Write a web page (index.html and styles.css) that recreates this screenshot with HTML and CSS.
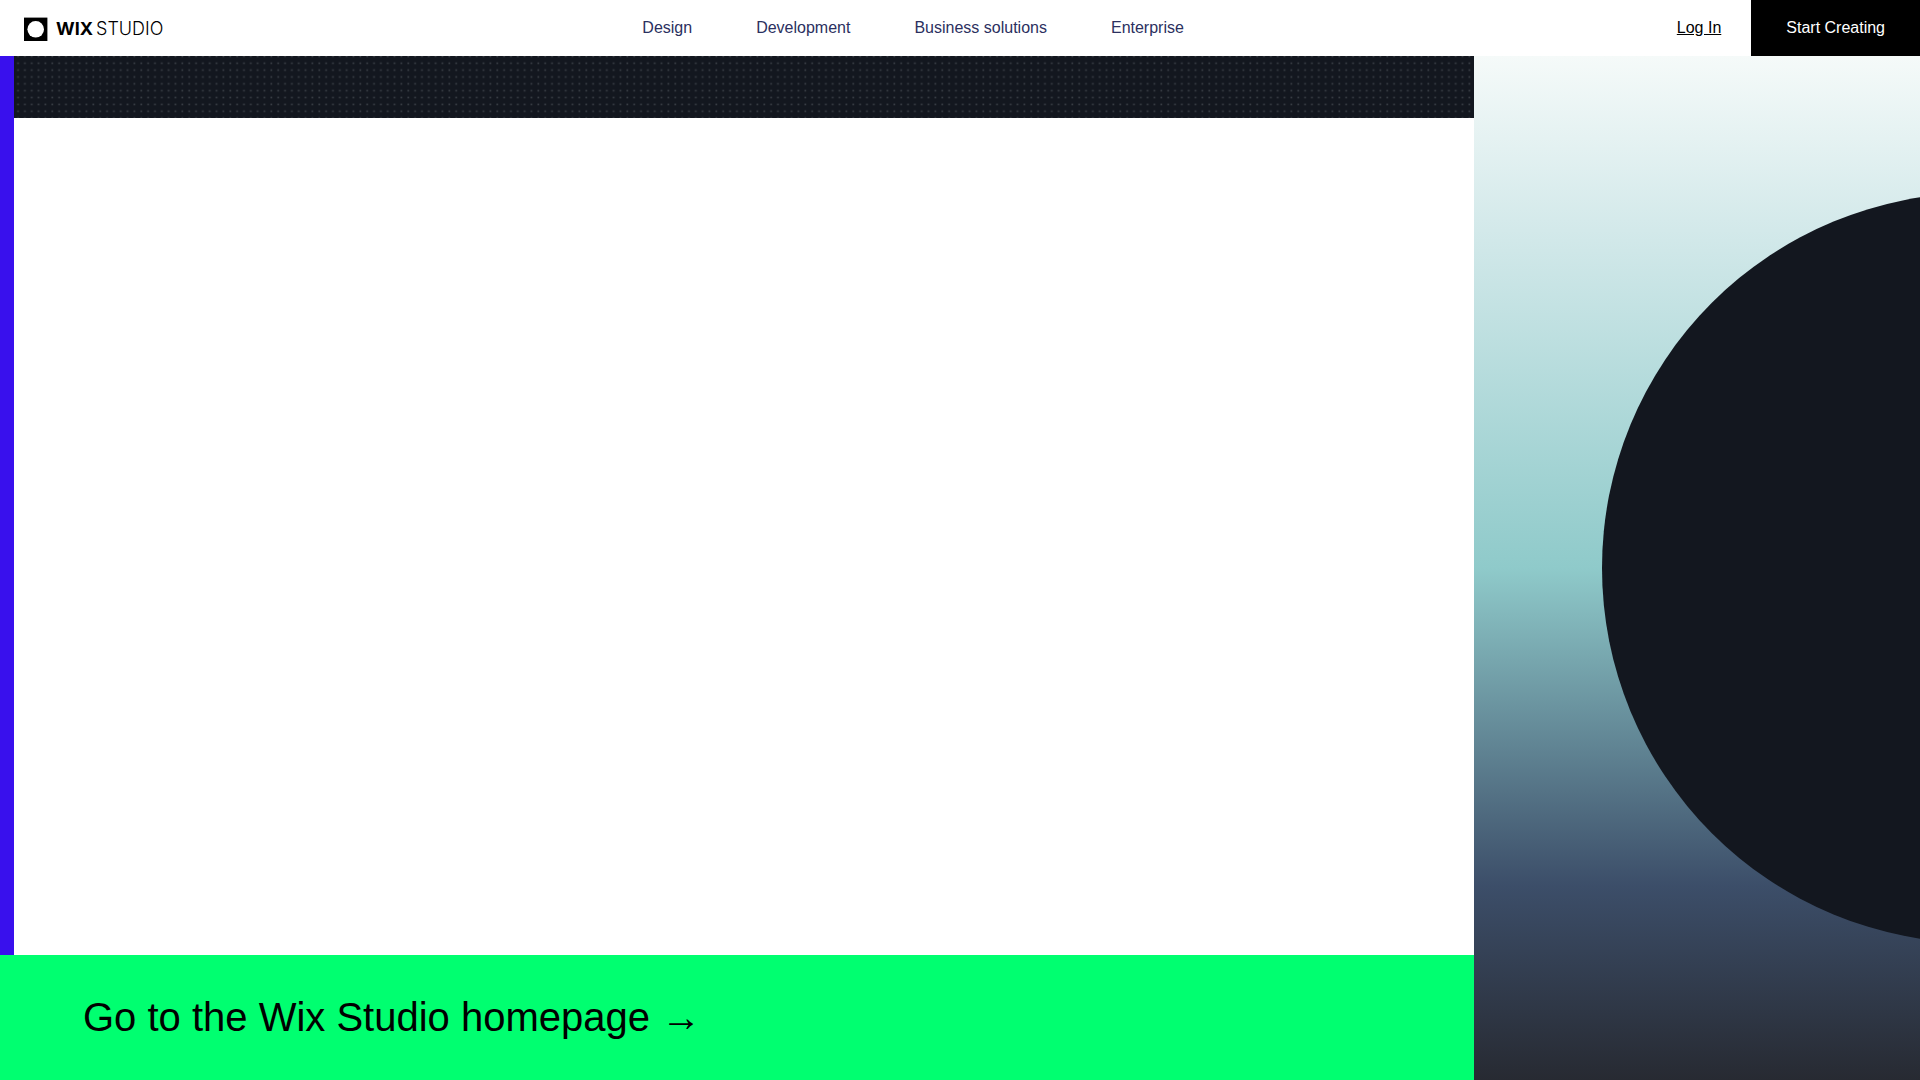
FILE: index.html
```html
<!DOCTYPE html>
<html lang="en">
<head>
  <meta charset="UTF-8" />
  <meta name="viewport" content="width=device-width, initial-scale=1.0" />
  <title>Wix Studio</title>
  <link rel="stylesheet" href="styles.css">
</head>
<body>
  <header class="site-header">
    <a class="logo" href="#">
      <svg class="logo-mark" viewBox="0 0 24 24" aria-hidden="true">
        <rect y="0.6" width="23.4" height="23.4" />
        <circle cx="11.7" cy="12.3" r="8.3" fill="#fff" />
      </svg>
      <span class="logo-text"><b>WIX</b><span class="logo-studio">STUDIO</span></span>
    </a>
    <nav class="main-nav">
      <a href="#">Design</a>
      <a href="#">Development</a>
      <a href="#">Business solutions</a>
      <a href="#">Enterprise</a>
    </nav>
    <div class="account">
      <a class="login" href="#">Log In</a>
      <a class="start-btn" href="#">Start Creating</a>
    </div>
  </header>

  <main class="hero">
    <section class="left-side">
      <div class="canvas">
        <svg class="dots" aria-hidden="true">
          <defs>
            <pattern id="dotGrid" x="0.8" y="-3" width="6.846" height="6.857" patternUnits="userSpaceOnUse">
              <rect x="2.4" y="2.6" width="1.7" height="1.6" fill="#3a3f46" />
            </pattern>
          </defs>
          <rect width="100%" height="100%" fill="url(#dotGrid)" />
        </svg>
      </div>
      <a class="home-link" href="#">Go to the Wix Studio homepage →</a>
    </section>
    <section class="right-side">
      <div class="circle"></div>
    </section>
  </main>
</body>
</html>
```

FILE: styles.css
```css
* {
  box-sizing: border-box;
}
body {
  margin: 0;
  min-height: 100vh;
  display: flex;
  flex-direction: column;
  background: #fff;
  color: #000;
  font-family: "Liberation Sans", Arial, sans-serif;
  font-size: 16px;
}
a {
  color: inherit;
  text-decoration: none;
}

/* header */
.site-header {
  display: flex;
  justify-content: space-between;
  height: 56px;
}
.logo {
  display: flex;
  align-items: center;
  gap: 8px;
  padding-left: 24px;
  padding-top: 1px;
}
.logo-mark {
  width: 24px;
  height: 24px;
}
.logo-text {
  display: flex;
  gap: 3px;
  font-family: Inter, sans-serif;
  font-size: 18px;
  line-height: 24px;
}
.logo-studio {
  font-weight: 300;
}
.main-nav {
  display: flex;
  align-items: center;
  gap: 64px;
  color: #2b3060;
}
.account {
  display: flex;
  align-items: center;
  gap: 30px;
  padding-left: 14px;
}
.login {
  text-decoration: underline;
}
.start-btn {
  display: flex;
  align-items: center;
  align-self: stretch;
  padding: 0 35px;
  background: #000;
  color: #fff;
}

/* content */
.hero {
  flex: 1;
  display: grid;
  grid-template-columns: 1474fr 446fr;
}
.left-side {
  display: flex;
  flex-direction: column;
}
.canvas {
  flex: 1;
  border-left: 14px solid #3910ed;
}
.dots {
  display: block;
  width: 100%;
  height: 62px;
  background: #13171f;
}
.home-link {
  padding: 38px 83px 39px;
  background: #00ff70;
  font-size: 40px;
  line-height: 48px;
}
.right-side {
  display: flex;
  align-items: center;
  overflow: hidden;
  background: linear-gradient(#f5faf9 0%, #d3e9ea 17%, #8fcaca 50%, #3c4e69 81%, #272a32 100%);
}
.circle {
  flex: none;
  width: 750px;
  height: 750px;
  margin-left: 128px;
  border-radius: 50%;
  background: #13171f;
}
```
